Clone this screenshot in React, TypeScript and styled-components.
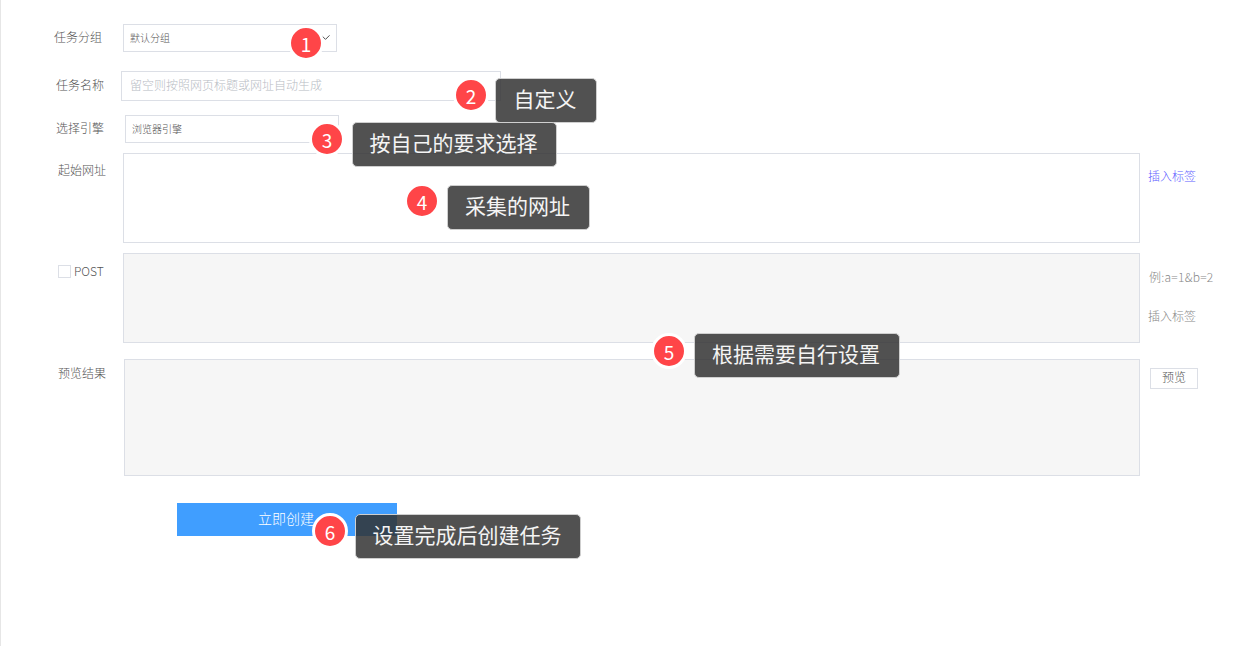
import React from 'react';
import styled, {createGlobalStyle} from 'styled-components';
import {ChevronDown} from 'lucide-react';

const GlobalStyle = createGlobalStyle`
    html, body {
        margin: 0;
        padding: 0;
        background: #fff;
    }
    * {
        box-sizing: border-box;
    }
`;

const FONT = `"Noto Sans CJK SC", "Noto Sans", sans-serif`;

const Page = styled.div`
    position: relative;
    width: 1242px;
    height: 646px;
    overflow: hidden;
    padding-top: 24px;
    background: #fff;
    border-left: 1px solid #e6e6e6;
    font-family: ${FONT};
    font-weight: 300;
`;
const Row = styled.div<{$gap?: number; $center?: boolean}>`
    display: flex;
    align-items: ${p => p.$center ? 'center' : 'flex-start'};
    margin-top: ${p => p.$gap ?? 0}px;
`;
const Label = styled.label<{$width: number; $left: number; $top?: number; $lift?: boolean}>`
    flex: none;
    display: flex;
    align-items: center;
    width: ${p => p.$width}px;
    padding-left: ${p => p.$left}px;
    padding-top: ${p => p.$top ?? 0}px;
    padding-bottom: ${p => p.$lift ? 2 : 0}px;
    font-size: 12px;
    line-height: 18px;
    color: #555;
`;
const Select = styled.div`
    display: flex;
    align-items: center;
    justify-content: space-between;
    width: 214px;
    height: 28px;
    padding: 0 3px 2px 6px;
    border: 1px solid #dcdfe6;
    font-size: 10px;
    color: #555;
`;
const TextInput = styled.input`
    width: 380px;
    height: 30px;
    padding: 0 8px 3px 8px;
    border: 1px solid #dcdfe6;
    outline: none;
    font-family: ${FONT};
    font-weight: 300;
    font-size: 12px;
    &::placeholder {
        color: #b8bcc4;
        opacity: 1;
    }
`;
const Area = styled.textarea<{$width: number; $height: number; $off?: boolean}>`
    display: block;
    flex: none;
    width: ${p => p.$width}px;
    height: ${p => p.$height}px;
    border: 1px solid #dcdfe6;
    background: ${p => p.$off ? '#f6f6f6' : '#fff'};
    outline: none;
    resize: none;
`;
const Side = styled.div<{$left: number}>`
    display: flex;
    flex-direction: column;
    align-items: flex-start;
    padding-left: ${p => p.$left}px;
`;
const TagLink = styled.a<{$top: number; $off?: boolean}>`
    margin-top: ${p => p.$top}px;
    font-size: 12px;
    line-height: 18px;
    color: ${p => p.$off ? '#888' : '#5f5fff'};
`;
const Hint = styled.span`
    margin: 15px 0 0 1px;
    font-size: 12px;
    line-height: 18px;
    letter-spacing: 0.25px;
    color: #888;
    white-space: nowrap;
`;
const PreviewButton = styled.button`
    width: 48px;
    height: 21px;
    margin-top: 9px;
    padding: 0 0 3px;
    border: 1px solid #dcdfe6;
    background: #fff;
    font-family: ${FONT};
    font-weight: 300;
    font-size: 12px;
    line-height: 16px;
    color: #555;
`;
const Check = styled.span`
    width: 13px;
    height: 13px;
    margin-right: 3px;
    border: 1px solid #dcdfe6;
`;
const SubmitButton = styled.button`
    display: block;
    width: 220px;
    height: 33px;
    margin: 27px 0 0 176px;
    padding: 0 2px 3px 0;
    border: none;
    background: #409eff;
    color: #fff;
    font-family: ${FONT};
    font-weight: 300;
    font-size: 14px;
`;
const Badge = styled.span<{$x: number; $y: number}>`
    position: absolute;
    left: ${p => p.$x - 4}px;
    top: ${p => p.$y - 3}px;
    display: flex;
    align-items: center;
    justify-content: center;
    width: 36px;
    height: 36px;
    border: 3px solid #fff;
    border-radius: 50%;
    background: #ff4548;
    color: #fff;
    font-size: 19px;
    font-weight: 400;
`;
const Tip = styled.span<{$x: number; $y: number; $w: number}>`
    position: absolute;
    left: ${p => p.$x - 1}px;
    top: ${p => p.$y}px;
    display: flex;
    align-items: center;
    justify-content: center;
    width: ${p => p.$w}px;
    height: 45px;
    padding: 0 2px 6px 0;
    border: 1px solid #cfcfcf;
    border-radius: 5px;
    background: rgba(51, 51, 51, 0.85);
    color: #f4f4f4;
    font-size: 21px;
    font-weight: 400;
    white-space: nowrap;
`;

const NOTES = [
    {n: 1, bx: 291, by: 28, tx: 0, ty: 0, w: 0, text: ''},
    {n: 2, bx: 456, by: 80, tx: 495, ty: 78, w: 102, text: '自定义'},
    {n: 3, bx: 312, by: 124, tx: 352, ty: 122, w: 205, text: '按自己的要求选择'},
    {n: 4, bx: 407, by: 186, tx: 447, ty: 185, w: 143, text: '采集的网址'},
    {n: 5, bx: 654, by: 336, tx: 694, ty: 333, w: 206, text: '根据需要自行设置'},
    {n: 6, bx: 315, by: 516, tx: 355, ty: 514, w: 226, text: '设置完成后创建任务'},
];

function App() {
    return (
        <Page>
            <GlobalStyle/>
            <Row $center>
                <Label $width={122} $left={53} $lift>任务分组</Label>
                <Select>默认分组<ChevronDown size={15} strokeWidth={1.5} color="#444"/></Select>
            </Row>
            <Row $gap={19} $center>
                <Label $width={120} $left={55} $lift>任务名称</Label>
                <TextInput placeholder="留空则按照网页标题或网址自动生成"/>
            </Row>
            <Row $gap={14} $center>
                <Label $width={124} $left={55} $lift>选择引擎</Label>
                <Select>浏览器引擎<ChevronDown size={15} strokeWidth={1.5} color="#444"/></Select>
            </Row>
            <Row $gap={10}>
                <Label $width={122} $left={57} $top={8}>起始网址</Label>
                <Area $width={1017} $height={90}/>
                <Side $left={8}>
                    <TagLink $top={14}>插入标签</TagLink>
                </Side>
            </Row>
            <Row $gap={10}>
                <Label $width={122} $left={57} $top={9}><Check/>POST</Label>
                <Area $width={1017} $height={90} $off/>
                <Side $left={8}>
                    <Hint>例:a=1&amp;b=2</Hint>
                    <TagLink $top={21} $off>插入标签</TagLink>
                </Side>
            </Row>
            <Row $gap={16}>
                <Label $width={123} $left={57} $top={5}>预览结果</Label>
                <Area $width={1016} $height={117} $off/>
                <Side $left={10}>
                    <PreviewButton>预览</PreviewButton>
                </Side>
            </Row>
            <SubmitButton>立即创建</SubmitButton>
            {NOTES.map(note => (
                <React.Fragment key={note.n}>
                    <Badge $x={note.bx} $y={note.by}>{note.n}</Badge>
                    {note.text && <Tip $x={note.tx} $y={note.ty} $w={note.w}>{note.text}</Tip>}
                </React.Fragment>
            ))}
        </Page>
    );
}

export default App;
